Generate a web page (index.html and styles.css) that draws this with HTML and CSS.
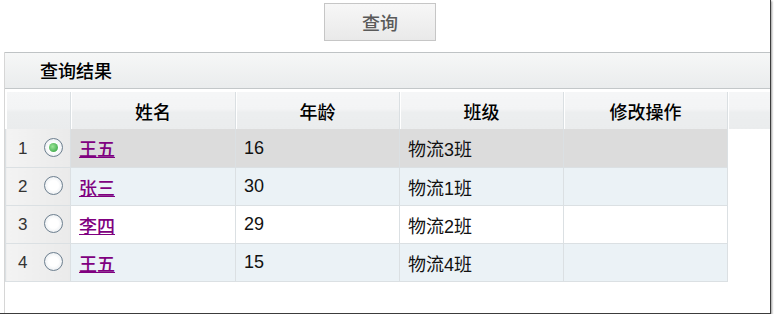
FILE: index.html
```html
<!DOCTYPE html>
<html lang="zh-CN">
<head>
    <meta charset="UTF-8">
    <title>查询结果</title>
    <link rel="stylesheet" href="styles.css">
</head>
<body>
    <div class="frame">
        <div class="toolbar">
            <button class="btn-query" type="button">查询</button>
        </div>
        <div class="panel">
            <div class="panel-title">查询结果</div>
            <table class="grid">
                <colgroup>
                    <col class="c-idx">
                    <col class="c-name">
                    <col class="c-age">
                    <col class="c-class">
                    <col class="c-op">
                    <col class="c-fill">
                </colgroup>
                <thead>
                    <tr>
                        <th></th>
                        <th>姓名</th>
                        <th>年龄</th>
                        <th>班级</th>
                        <th>修改操作</th>
                        <th class="filler"></th>
                    </tr>
                </thead>
                <tbody>
                    <tr class="selected">
                        <td class="idx"><span class="num">1</span><span class="radio checked"></span></td>
                        <td><a href="#">王五</a></td>
                        <td>16</td>
                        <td>物流3班</td>
                        <td></td>
                        <td class="empty"></td>
                    </tr>
                    <tr class="alt">
                        <td class="idx"><span class="num">2</span><span class="radio"></span></td>
                        <td><a href="#">张三</a></td>
                        <td>30</td>
                        <td>物流1班</td>
                        <td></td>
                        <td class="empty"></td>
                    </tr>
                    <tr>
                        <td class="idx"><span class="num">3</span><span class="radio"></span></td>
                        <td><a href="#">李四</a></td>
                        <td>29</td>
                        <td>物流2班</td>
                        <td></td>
                        <td class="empty"></td>
                    </tr>
                    <tr class="alt">
                        <td class="idx"><span class="num">4</span><span class="radio"></span></td>
                        <td><a href="#">王五</a></td>
                        <td>15</td>
                        <td>物流4班</td>
                        <td></td>
                        <td class="empty"></td>
                    </tr>
                </tbody>
            </table>
        </div>
    </div>
</body>
</html>
```

FILE: styles.css
```css
body {
    margin: 0;
    background-color: white;
    font-family: "Liberation Sans", "Noto Sans CJK SC", sans-serif;
    color: #111;
}
.frame {
    width: 770px;
    height: 313px;
    border-right: 1px solid #3c3c3c;
    border-bottom: 1px solid #3c3c3c;
    box-shadow: 1px 1px 2px #9a9a9a;
    overflow: hidden;
}
.toolbar {
    height: 52px;
    padding-top: 3px;
    box-sizing: border-box;
}
.btn-query {
    margin-left: 324px;
    width: 112px;
    height: 38px;
    border: 1px solid #c6c6c6;
    background: linear-gradient(#f7f7f7, #e9e9e9);
    color: #5a5a5a;
    font-family: "Noto Sans CJK SC", sans-serif;
    font-size: 18px;
    font-weight: 500;
    padding: 0;
}
.panel {
    margin-left: 4px;
    border-left: 1px solid #d6d6d6;
    height: 261px;
}
.panel-title {
    height: 35px;
    line-height: 35px;
    border-top: 1px solid #bfc3c5;
    border-bottom: 1px solid #c3c7c9;
    background: linear-gradient(#f6f7f7, #eaeced);
    padding-left: 35px;
    font-family: "Noto Sans CJK SC", sans-serif;
    font-size: 18px;
    font-weight: 500;
    color: #000;
}
.grid {
    margin-top: 3px;
    border-collapse: collapse;
    table-layout: fixed;
    width: 765px;
    font-size: 18px;
}
.c-idx { width: 65px; }
.c-name { width: 165px; }
.c-age, .c-class, .c-op { width: 164px; }
.c-fill { width: 43px; }
.grid th {
    height: 37px;
    padding: 0;
    font-weight: 500;
    font-family: "Noto Sans CJK SC", sans-serif;
    color: #000;
    text-align: center;
    background: linear-gradient(#f5f6f7 0%, #f3f4f5 45%, #eceeef 55%, #eaeced 100%);
    border-right: 1px solid #dadfe2;
    box-shadow: inset 1px 0 0 #ffffff;
}
.grid th.filler {
    border-right: none;
}
.grid td {
    height: 37px;
    padding: 0 0 0 8px;
    border: 1px solid #dbe0e3;
    border-top: none;
    color: #111;
    vertical-align: middle;
}
.grid tr:first-child td {
    height: 38px;
}
.grid tr.selected td {
    background-color: #dcdcdc;
}
.grid tr.alt td {
    background-color: #ebf2f6;
}
.grid td.idx,
.grid tr.selected td.idx,
.grid tr.alt td.idx {
    padding: 0;
    background: linear-gradient(90deg, #f3f3f3, #eaeaea);
    white-space: nowrap;
}
.grid td.empty,
.grid tr.selected td.empty,
.grid tr.alt td.empty {
    background: white;
    border: none;
}
.num {
    display: inline-block;
    width: 12px;
    margin-left: 12px;
    font-size: 17px;
    color: #333;
}
.radio {
    display: inline-block;
    width: 17px;
    height: 17px;
    margin-left: 14px;
    border: 1px solid #6d7f8f;
    border-radius: 50%;
    background: radial-gradient(circle, #ffffff 40%, #dfe4e9 100%);
    vertical-align: -3px;
    position: relative;
}
.radio.checked::after {
    content: "";
    position: absolute;
    left: 4px;
    top: 4px;
    width: 9px;
    height: 9px;
    border-radius: 50%;
    background: radial-gradient(circle at 40% 40%, #9be696, #2a9a3a);
}
.grid a {
    color: #800080;
    font-family: "Noto Sans CJK SC", sans-serif;
    font-weight: 500;
}
```
